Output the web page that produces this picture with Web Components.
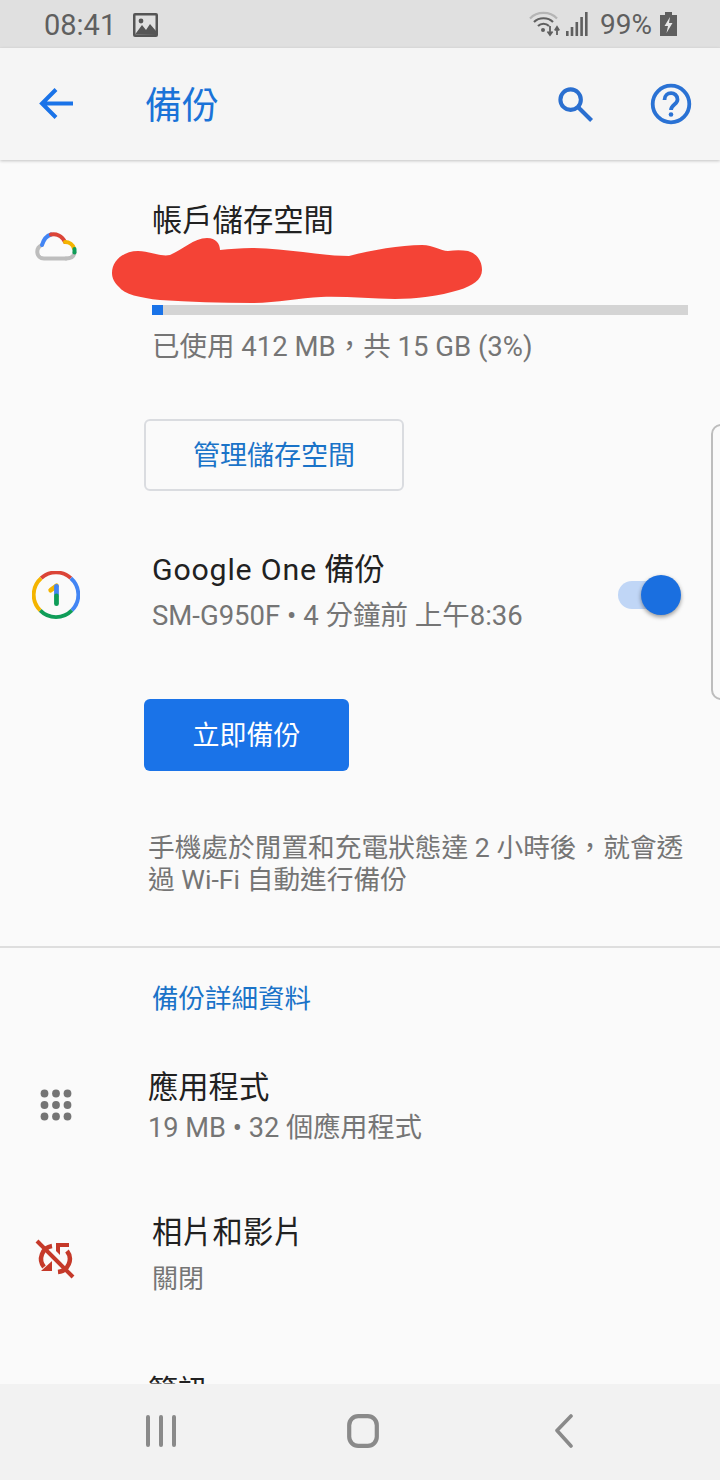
<!DOCTYPE html>
<html lang="zh-Hant"><head><meta charset="utf-8"><title>備份</title>
<style>
html,body{margin:0;padding:0;background:#fafafa}
body{width:720px;height:1480px;overflow:hidden;font-family:Roboto,"Noto Sans CJK TC",sans-serif}
</style></head><body>
<backup-app></backup-app>
<script>
const F='Roboto,"Noto Sans CJK TC",sans-serif';
function def(name,css,html){
  customElements.define(name,class extends HTMLElement{
    constructor(){super();const r=this.attachShadow({mode:'open'});r.innerHTML=`<style>${css}</style>${html}`;}
  });
}
def('status-bar',`:host{display:flex;align-items:center;height:48px;background:#e0e0e0;color:#5f5f5f;font:400 29px/1 ${F};padding:0 43px 0 44px;box-sizing:border-box;flex:none}
.l{display:flex;align-items:center;gap:17px;transform:translateY(1px)}.r{margin-left:auto;display:flex;align-items:center}
svg{display:block}.p{margin:2px 8px 0 12px;font-size:28px}`,
`<div class="l"><span>08:41</span><svg width="25" height="24" viewBox="0 0 25 24"><rect width="25" height="24" rx="2" fill="#555"/><rect x="2.5" y="2.5" width="20" height="19" fill="#e0e0e0"/><circle cx="8" cy="8" r="2.4" fill="#555"/><path d="M2 21.5 9 12l4 5 4-6 6 7v4z" fill="#555"/></svg></div>
<div class="r"><svg width="32" height="28" viewBox="0 0 32 28" fill="none"><path d="M1 8.5C8 1 21 1 28 8.5" stroke="#b5b5b5" stroke-width="2.2"/><path d="M5 12c5-5 14-5 19 0M9 16c3-3 8-3 11 0" stroke="#5f5f5f" stroke-width="2.2"/><circle cx="14" cy="20" r="2" fill="#5f5f5f"/><path d="M21 16v8M18.5 21.5 21 25l2.500-3.500M28 25v-7M25.800 20.500 28 17l2.200 3.500" stroke="#5f5f5f" stroke-width="1.800"/></svg>
<svg width="22" height="24" viewBox="0 0 22 24" style="margin-left:5px" fill="#5f5f5f"><rect x="0" y="19" width="2.600" height="5"/><rect x="4.700" y="15" width="2.600" height="9"/><rect x="9.500" y="10" width="2.600" height="14"/><rect x="14.300" y="5" width="2.600" height="19"/><rect x="19" y="0" width="2.600" height="24"/></svg>
<span class="p">99%</span>
<svg width="17" height="24" viewBox="0 0 17 24"><path d="M5 0h7v3h5v21H0V3h5z" fill="#5f5f5f"/><path d="M10 5 4.500 14H8l-1.500 7 6-10H9z" fill="#e8e8e8"/></svg></div>`);

def('app-bar',`:host{display:flex;align-items:center;height:112px;background:#f5f5f5;box-shadow:0 1px 3px rgba(0,0,0,.22);position:relative;z-index:2;flex:none;padding:0 28px 0 38px;box-sizing:border-box}
h1{margin:0 0 0 70px;font:400 37px/1 ${F};color:#1a73d8;transform:translateY(2px)}
.s{margin-left:auto;display:flex;align-items:center;gap:56px}svg{display:block}`,
`<svg width="37" height="36" viewBox="0 0 37 36" fill="none" stroke="#1a73e8" stroke-width="4"><path d="M35 17.500H5M18 3.500 4 17.500l14 14"/></svg><h1>備份</h1>
<div class="s"><svg width="37" height="37" viewBox="0 0 38 38" fill="none" stroke="#2a6fd0" stroke-width="4.200"><circle cx="14" cy="14" r="10.500"/><path d="m21.500 21.500 14 14"/></svg>
<svg width="42" height="42" viewBox="0 0 42 42" fill="none" stroke="#2a72d4"><circle cx="21" cy="21" r="18.300" stroke-width="3.800"/><path d="M14.500 17c0-9 13-9 13-.5 0 5-6.500 5-6.500 10.500" stroke-width="3.800"/><circle cx="21" cy="31.500" r="2.300" fill="#2a72d4" stroke="none"/></svg></div>`);

def('nav-bar',`:host{display:flex;align-items:center;height:96px;background:#f2f2f2;position:relative;z-index:2;flex:none;padding:0 0 2px 146px;box-sizing:border-box}svg{display:block}`,
`<svg width="30" height="32" viewBox="0 0 30 32" stroke="#8a8a8a" stroke-width="4" stroke-linecap="round"><path d="M2 2v28M15 2v28M28 2v28"/></svg>
<svg width="32" height="34" viewBox="0 0 32 34" fill="none" stroke="#8a8a8a" stroke-width="4.200" style="margin-left:171px"><rect x="2.200" y="2.200" width="27.600" height="29.600" rx="9"/></svg>
<svg width="20" height="34" viewBox="0 0 20 34" fill="none" stroke="#8a8a8a" stroke-width="3.600" stroke-linecap="round" stroke-linejoin="round" style="margin-left:175px"><path d="M17 2 3 16.500 17 32"/></svg>`);

def('text-row',`:host{display:grid;grid-template-columns:var(--tx,152px) 1fr;align-items:center}
.i{display:flex;justify-content:center;width:112px}
.t{min-width:0}
::slotted([slot=title]){display:block;font:400 30.300px/40px ${F};color:#212121}
::slotted([slot=sub]){display:block;font:400 27.500px/36px ${F};color:#757575}`,
`<div class="i"><slot name="icon"></slot></div><div class="t"><slot name="title"></slot><slot></slot><slot name="sub"></slot></div>`);

def('ui-button',`:host{display:flex;align-items:center;justify-content:center;box-sizing:border-box;height:72px;padding-top:2px;border-radius:6px;font:400 27px/1 ${F}}
:host([kind=outline]){width:260px;background:#fafafa;border:2px solid #dadce0;color:#1a73c8}
:host([kind=fill]){width:205px;background:#1a73e8;color:#fff}`,`<slot></slot>`);

def('usage-bar',`:host{display:block;height:10px;background:#d4d4d4}div{width:11px;height:100%;background:#1a73e8}`,`<div></div>`);

def('ui-toggle',`:host{display:block;position:relative;width:63px;height:40px}
.t{position:absolute;left:0;top:6px;width:50px;height:28px;border-radius:14px;background:#c0d6f6}
.k{position:absolute;right:0;top:0;width:40px;height:40px;border-radius:50%;background:#1a6fe0;box-shadow:0 2px 4px rgba(0,0,0,.4)}`,`<div class="t"></div><div class="k"></div>`);

def('backup-app',`:host{display:flex;flex-direction:column;width:720px;height:1480px;position:relative;overflow:hidden}
main{flex:1;min-height:0;overflow:hidden;background:#fafafa;position:relative}
.a{padding-top:41px}
.bar{margin:7px 32px 0 152px}
.use{display:block;margin:14px 0 0 152px;font:400 27.500px/36px ${F};color:#757575}
.b1{margin:54px 0 0 144px}
.g{margin-top:59px}
.b2{margin:65px 0 0 144px}
.d{margin:61px 30px 0 148px;font:400 26.700px/32px ${F};color:#757575}
hr{margin:50px 0 0;border:0;border-top:2px solid #dedede}
h2{margin:33px 0 0 152px;font:400 26.500px/36px ${F};color:#1a73c8}
.apps{margin-top:51px;--tx:148px}
.apps span[slot=sub]{font-size:27.200px}
.ph{margin-top:67px}
.more{margin:74px 0 0 148px;font:400 30px/40px ${F};color:#212121}
.red{position:absolute;left:110px;top:76px}
.edge{position:absolute;left:711px;top:264px;width:20px;height:276px;box-sizing:border-box;border:2px solid #bdbdbd;border-radius:10px;background:#fafafa}
.tg{position:absolute;left:618px;top:415px}
svg{display:block}`,
`<status-bar></status-bar><app-bar></app-bar>
<main>
<div class="a"><text-row><svg slot="icon" width="42" height="30" viewBox="0 0 42 30" fill="none" stroke-width="4" stroke-linecap="round" style="margin:0 1px 8px 0">
<path d="M31 27.500H9C1 27.500 0 17 7 14" stroke="#bdbdbd"/><path d="M31 27.500c5 0 8-2.500 8.500-6" stroke="#bdbdbd"/>
<path d="M7 14c1.500-5 4-9 9-10.500" stroke="#4285f4"/><path d="M16 3.500c5-1 11 1 14 7.500" stroke="#db4437"/><path d="M30 11c4.500 0 8 3 9 6.500" stroke="#f4b400"/><path d="M39.500 18v3.500" stroke="#0f9d58"/></svg>
<span slot="title">帳戶儲存空間</span><div style="height:57px"></div></text-row>
<div class="bar"><usage-bar></usage-bar></div>
<span class="use">已使用 412 MB，共 15 GB (3%)</span>
<ui-button class="b1" kind="outline">管理儲存空間</ui-button></div>
<div class="g"><text-row><svg slot="icon" width="48" height="48" viewBox="0 0 50 50" fill="none" stroke-width="4" style="margin:6px 0 0 0">
<path d="M9.500 7.500A23 23 0 0 1 40.500 7.500" stroke="#db4437"/><path d="M40.500 7.500A23 23 0 0 1 41.500 41" stroke="#4285f4"/><path d="M41.500 41A23 23 0 0 1 8.500 41" stroke="#0f9d58"/><path d="M8.500 41A23 23 0 0 1 9.500 7.500" stroke="#f4b400"/>
<path d="M19.500 20 25.500 15.500" stroke="#f4b400" stroke-linecap="round" stroke-width="5"/><path d="M25.500 16V25" stroke="#4285f4" stroke-width="5" stroke-linecap="round"/><path d="M25.500 26v8" stroke="#0f9d58" stroke-width="5" stroke-linecap="round"/></svg>
<span slot="title"><span style="letter-spacing:.8px">Google One</span> 備份</span><span slot="sub" style="margin-top:8px">SM-G950F • 4 分鐘前 上午8:36</span></text-row>
<ui-button class="b2" kind="fill">立即備份</ui-button>
<div class="d">手機處於閒置和充電狀態達 2 小時後，就會透過 Wi-Fi 自動進行備份</div></div>
<hr><h2>備份詳細資料</h2>
<div class="apps"><text-row><svg slot="icon" width="32" height="32" viewBox="0 0 32 32" fill="#757575" style="margin-bottom:4px"><circle cx="4.500" cy="4.500" r="3.900"/><circle cx="16" cy="4.500" r="3.900"/><circle cx="27.500" cy="4.500" r="3.900"/><circle cx="4.500" cy="16" r="3.900"/><circle cx="16" cy="16" r="3.900"/><circle cx="27.500" cy="16" r="3.900"/><circle cx="4.500" cy="27.500" r="3.900"/><circle cx="16" cy="27.500" r="3.900"/><circle cx="27.500" cy="27.500" r="3.900"/></svg>
<span slot="title">應用程式</span><span slot="sub" style="margin-top:2px">19 MB • 32 個應用程式</span></text-row></div>
<div class="ph"><text-row><svg slot="icon" width="40" height="40" viewBox="0 0 40 40" fill="none" stroke="#c53929" style="margin:7px 0 0 -2px">
<path d="M2 2 38 38" stroke-width="4"/><path d="M17 7A13 13 0 0 0 9 28" stroke-width="4.500"/><path d="M6 32h11V22z" fill="#c53929" stroke="none"/><path d="M23 33A13 13 0 0 0 32 12" stroke-width="4.500"/><path d="M21 4h13v4H25v8l-4-4z" fill="#c53929" stroke="none"/></svg>
<span slot="title">相片和影片</span><span slot="sub" style="font-size:26px;margin-top:8px">關閉</span></text-row></div>
<div class="more">簡訊</div>
<svg class="red" width="374" height="70" viewBox="0 0 374 70"><path d="M2 37C2 24 14 15 28 15C40 15 50 21 60 19C72 14 84 2 97 2C106 2 110 8 110 14C120 13 130 12 142 12C175 12 210 20 239 20C262 14 290 9 312 9C324 9 330 15 338 15C345 14 352 14 358 15C368 18 372 26 372 34C372 44 362 50 349 54C330 60 305 63 285 63C260 63 235 60 211 61C190 62 165 67 142 67C110 67 80 66 50 64C30 62 14 58 9 51C4 46 2 42 2 37Z" fill="#f44336"/></svg>
<ui-toggle class="tg"></ui-toggle>
<div class="edge"></div>
</main>
<nav-bar></nav-bar>`);
</script>
</body></html>
